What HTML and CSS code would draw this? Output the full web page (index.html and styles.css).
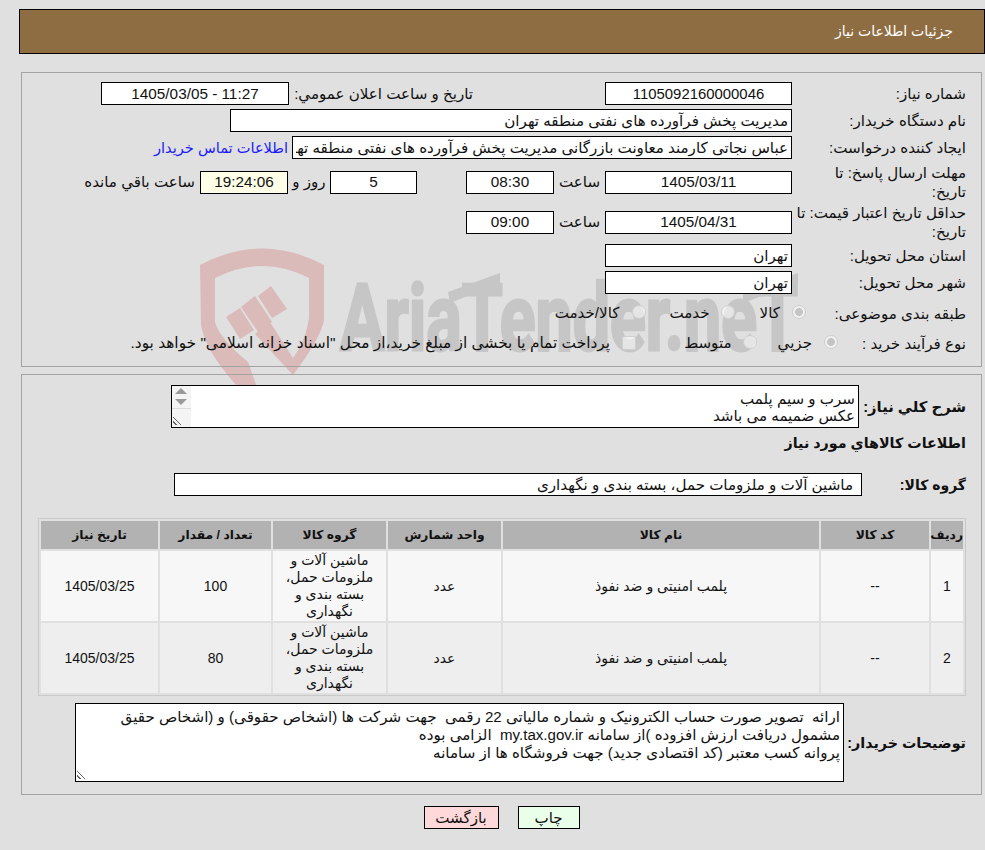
FILE: index.html
```html
<!DOCTYPE html>
<html lang="fa" dir="rtl">

<head>
  <meta charset="UTF-8" />
  <title>جزئیات اطلاعات نیاز</title>
  <link rel="stylesheet" href="styles.css">
</head>

<body>

  <!-- watermark sits behind the panels -->
  <svg class="watermark" width="985" height="850" viewBox="0 0 985 850" aria-hidden="true">
    <path fill="#dbbaba" d="M200,265 Q262,232 324,265 L324,320 Q321,338 293,375 L293,358 Q306,340 309,318 L309,278 Q262,254 215,278 L215,322 Q219,338 248,362 L258,390 L262,405 L236,385 Q205,350 201,325 Z" />
    <polygon fill="#dbbaba" points="226,317 240,308 254,330 240,339" />
    <polygon fill="#dbbaba" points="241,307 255,296 272,322 258,332" />
    <polygon fill="#dbbaba" points="258,296 271,286 287,309 272,318" />
    <polygon fill="#dbbaba" points="262,328 270,322 293,358 293,375 255,334" />
    <text class="wm-text" direction="ltr" x="340" y="350" textLength="458" lengthAdjust="spacingAndGlyphs">AriaTender.neT</text>
    <polygon fill="#c6c6c6" points="448,292 500,273 500,283 450,303" />
    <polygon fill="#c6c6c6" points="743,293 798,273 798,283 743,303" />
  </svg>

  <div class="page-title">جزئیات اطلاعات نیاز</div>

  <div class="panel panel-top">
    <div class="row">
      <div class="label">شماره نیاز:</div>
      <input class="field field-main center field-id" readonly value="1105092160000046">
      <div class="label-second">تاریخ و ساعت اعلان عمومي:</div>
      <input class="field field-announce center" dir="ltr" readonly value="1405/03/05 - 11:27">
    </div>
    <div class="row">
      <div class="label">نام دستگاه خریدار:</div>
      <input class="field field-buyer" readonly value="مدیریت پخش فرآورده های نفتی منطقه تهران">
    </div>
    <div class="row">
      <div class="label">ایجاد کننده درخواست:</div>
      <input class="field field-creator" readonly value="عباس نجاتی کارمند معاونت بازرگانی مدیریت پخش فرآورده های نفتی منطقه تهران">
      <a class="contact-link" href="#">اطلاعات تماس خریدار</a>
    </div>
    <div class="row row-tall">
      <div class="label">مهلت ارسال پاسخ: تا<br>تاریخ:</div>
      <input class="field field-main center" readonly value="1405/03/11">
      <div class="unit">ساعت</div>
      <input class="field field-time center" readonly value="08:30">
      <input class="field field-days center" readonly value="5">
      <div class="unit-days">روز و</div>
      <input class="field field-timer center" readonly value="19:24:06">
      <div class="timer-text">ساعت باقي مانده</div>
    </div>
    <div class="row row-tall row-tall-next">
      <div class="label">حداقل تاریخ اعتبار قیمت: تا<br>تاریخ:</div>
      <input class="field field-main center" readonly value="1405/04/31">
      <div class="unit">ساعت</div>
      <input class="field field-time center" readonly value="09:00">
    </div>
    <div class="row">
      <div class="label">استان محل تحویل:</div>
      <input class="field field-main" readonly value="تهران">
    </div>
    <div class="row">
      <div class="label">شهر محل تحویل:</div>
      <input class="field field-main" readonly value="تهران">
    </div>
    <div class="row row-choice">
      <div class="label label-cat">طبقه بندی موضوعی:</div>
      <div class="choices">
        <input class="radio" type="radio" name="cat" checked disabled>
        <span class="choice-1">کالا</span>
        <input class="radio radio-2" type="radio" name="cat" disabled>
        <span class="choice-2">خدمت</span>
        <input class="radio radio-3" type="radio" name="cat" disabled>
        <span class="choice-3">کالا/خدمت</span>
      </div>
    </div>
    <div class="row row-choice">
      <div class="label label-buy">نوع فرآیند خرید :</div>
      <div class="choices">
        <input class="radio" type="radio" name="buy" checked disabled>
        <span class="buy-1">جزيي</span>
        <input class="radio buy-radio-2" type="radio" name="buy" disabled>
        <span class="buy-2">متوسط</span>
        <span class="check-box"></span>
        <span class="buy-3">پرداخت تمام یا بخشی از مبلغ خرید،از محل "اسناد خزانه اسلامی" خواهد بود.</span>
      </div>
    </div>
  </div>

  <div class="panel panel-bottom">
    <div class="block-row">
      <div class="label-bold label-desc">شرح كلي نياز:</div>
      <div class="textbox textbox-desc">
        <div class="scroll-side">
          <span class="arrow-up"></span>
          <span class="arrow-down"></span>
          <span class="resize-mark"></span>
        </div>
        <div>سرب و سیم پلمب</div>
        <div>عکس ضمیمه می باشد</div>
      </div>
    </div>

    <h3 class="section-title">اطلاعات كالاهاي مورد نياز</h3>

    <div class="block-row group-row">
      <div class="label-bold label-group">گروه کالا:</div>
      <input class="field field-group" readonly value="ماشین آلات و ملزومات حمل، بسته بندی و نگهداری">
    </div>

    <table class="goods">
      <colgroup>
        <col class="c-idx"><col class="c-code"><col class="c-name"><col class="c-unit">
        <col class="c-group"><col class="c-qty"><col class="c-date">
      </colgroup>
      <thead>
        <tr>
          <th>ردیف</th>
          <th>کد کالا</th>
          <th>نام کالا</th>
          <th>واحد شمارش</th>
          <th>گروه کالا</th>
          <th>تعداد / مقدار</th>
          <th>تاریخ نیاز</th>
        </tr>
      </thead>
      <tbody>
        <tr class="odd">
          <td>1</td>
          <td>--</td>
          <td>پلمب امنیتی و ضد نفوذ</td>
          <td>عدد</td>
          <td>ماشین آلات و ملزومات حمل، بسته بندی و نگهداری</td>
          <td>100</td>
          <td>1405/03/25</td>
        </tr>
        <tr class="even">
          <td>2</td>
          <td>--</td>
          <td>پلمب امنیتی و ضد نفوذ</td>
          <td>عدد</td>
          <td>ماشین آلات و ملزومات حمل، بسته بندی و نگهداری</td>
          <td>80</td>
          <td>1405/03/25</td>
        </tr>
      </tbody>
    </table>

    <div class="block-row notes-row">
      <div class="label-bold label-notes">توضیحات خریدار:</div>
      <div class="textbox textbox-notes">
        <span class="resize-mark"></span>
        <div>ارائه&nbsp; تصویر صورت حساب الکترونیک و شماره مالیاتی 22 رقمی&nbsp; جهت شرکت ها (اشخاص حقوقی) و (اشخاص حقیق</div>
        <div>مشمول دریافت ارزش افزوده )از سامانه my.tax.gov.ir&nbsp; الزامی بوده</div>
        <div>پروانه کسب معتبر (کد اقتصادی جدید) جهت فروشگاه ها از سامانه</div>
      </div>
    </div>
  </div>

  <div class="buttons">
    <button class="print-btn">چاپ</button>
    <button class="back-btn">بازگشت</button>
  </div>

</body>

</html>
```

FILE: styles.css
```css
* {
  box-sizing: border-box;
}

body {
  margin: 0;
  padding-top: 9px;
  background: #e0e0e0;
  color: #111;
  font-family: "Liberation Sans", "DejaVu Sans", sans-serif;
  font-size: 15.1px;
  position: relative;
  height: 850px;
  overflow: hidden;
}

.watermark {
  position: absolute;
  top: 0;
  left: 0;
}

.wm-text {
  font-family: "Roboto", sans-serif;
  font-weight: 700;
  font-size: 92px;
  fill: #c6c6c6;
  stroke: #c6c6c6;
  stroke-width: 3px;
}

.page-title {
  position: relative;
  height: 45px;
  margin-left: 19px;
  padding: 13px 31px 0 0;
  background: #8f6d42;
  border: 1px solid #000;
  color: #fff;
  font-size: 14px;
}

.panel {
  position: relative;
  margin: 0 3px 0 21px;
  border: 1px solid #a3a3a3;
  padding-right: 15px;
}

.panel-top {
  height: 295px;
  margin-top: 18px;
  padding-top: 9px;
}

.panel-bottom {
  height: 421px;
  margin-top: 7px;
  padding-top: 10px;
}

/* top panel rows */
.row {
  display: flex;
  align-items: center;
  height: 23px;
  margin-bottom: 4px;
}

.row-tall {
  height: 38px;
  margin-bottom: 2px;
}

.row-tall-next {
  margin-bottom: 3px;
}

.row-choice {
  height: 24px;
  margin-top: 7px;
  margin-bottom: 6px;
}

.row-choice + .row-choice {
  margin-top: 6px;
}

.label {
  width: 174px;
  flex: none;
  line-height: 19px;
}

.label-cat { width: 160px; }
.label-buy { width: 128px; }

.label-second {
  width: 185px;
  margin-right: 131px;
  flex: none;
  padding-right: 1px;
}

.field {
  height: 23px;
  flex: none;
  border: 1px solid #000;
  border-radius: 0;
  background: #fff;
  color: #111;
  font-family: inherit;
  font-size: 15.1px;
  padding: 0 3px;
  outline: none;
}

.center {
  font-size: 15.3px;
  text-align: center;
}

.field-id { font-size: 14.9px; }

.field-main { width: 187px; }
.field-announce { width: 188px; }
.field-buyer { width: 562px; }
.field-creator { width: 500px; }
.field-time { width: 88px; }
.field-days { width: 87px; margin-right: 49px; }
.field-timer { width: 88px; background: #ffffe8; }
.field-group { width: 688px; padding-right: 8px; }

.contact-link {
  margin-right: 4px;
  color: #1a1aff;
  font-size: 14.6px;
  text-decoration: none;
}

.unit {
  width: 51px;
  flex: none;
  text-align: center;
}

.unit-days {
  width: 42px;
  flex: none;
  text-align: center;
}

.timer-text {
  margin-right: 5px;
}

/* radios */
.choices {
  display: flex;
  align-items: center;
}

.radio {
  appearance: none;
  width: 14px;
  height: 14px;
  flex: none;
  margin: 0 0 2px;
  border: 1px solid #cfcfcf;
  border-radius: 50%;
  background: rgba(255, 255, 255, 0.55);
}

.radio:checked {
  background: radial-gradient(circle, #c4c4c4 0, #c4c4c4 42%, #f0f0f0 50%);
}

.choice-1 { margin-right: 12px; }
.radio-2 { margin-right: 25px; }
.choice-2 { margin-right: 11px; }
.radio-3 { margin-right: 23px; }
.choice-3 { margin-right: 13px; }

.buy-1 { margin-right: 12px; }
.buy-radio-2 { margin-right: 21px; }
.buy-2 { margin-right: 11px; }

.check-box {
  width: 14px;
  height: 14px;
  flex: none;
  margin-right: 48px;
  border: 1px solid #cfcfcf;
  border-radius: 2px;
  background: rgba(255, 255, 255, 0.55);
}

.buy-3 { margin-right: 12px; font-size: 15.4px; white-space: nowrap; }

/* bottom panel */
.block-row {
  display: flex;
  align-items: center;
}

.label-bold {
  flex: none;
  font-weight: 700;
  font-size: 14.3px;
}

.label-desc { width: 107px; font-size: 14.8px; }
.label-group { width: 104px; font-size: 14px; }
.label-notes { width: 122px; }

.textbox {
  position: relative;
  flex: none;
  background: #fff;
  border: 1px solid #000;
  padding: 4px 3px;
  line-height: 18px;
  overflow: hidden;
  white-space: nowrap;
}

.textbox-desc {
  width: 688px;
  height: 43px;
  padding-top: 4px;
  line-height: 17px;
}

.textbox-notes {
  width: 769px;
  height: 79px;
}

.scroll-side {
  position: absolute;
  top: 0;
  left: 0;
  width: 19px;
  height: 100%;
  background: #f4f4f4;
}

.scroll-side::after {
  content: "";
  position: absolute;
  top: 22px;
  left: 0;
  width: 100%;
  border-top: 1px solid #dcdcdc;
}

.arrow-up,
.arrow-down {
  position: absolute;
  left: 3px;
  width: 0;
  height: 0;
  border-left: 6px solid transparent;
  border-right: 6px solid transparent;
}

.arrow-up {
  top: 2px;
  border-bottom: 6px solid #9a9a9a;
}

.arrow-down {
  top: 13px;
  border-top: 6px solid #9a9a9a;
}

.resize-mark {
  position: absolute;
  left: 1px;
  bottom: 2px;
  width: 10px;
  height: 10px;
  background: repeating-linear-gradient(45deg, transparent 0, transparent 2px, #666 2px, #666 3px);
  clip-path: polygon(0 0, 100% 100%, 0 100%);
}

.section-title {
  margin: 7px 0 0;
  height: 38px;
  font-size: 14.3px;
  font-weight: 700;
  line-height: 16px;
}

.group-row {
  height: 23px;
}

/* goods table */
.goods {
  width: 928px;
  margin-top: 22px;
  table-layout: fixed;
  border-collapse: separate;
  border-spacing: 2px;
  border: 1px solid #c9c9c9;
  font-size: 14px;
}

.c-idx { width: 32px; }
.c-code { width: 108px; }
.c-name { width: 316px; }
.c-unit { width: 113px; }
.c-group { width: 113px; }
.c-qty { width: 111px; }
.c-date { width: 117px; }

.goods th {
  height: 28px;
  padding: 0;
  background: #b2b2b2;
  font-size: 12.3px;
  font-weight: 700;
}

.goods td {
  height: 70px;
  padding: 0 6px;
  text-align: center;
  line-height: 17px;
}

.odd td { background: #f7f7f7; }
.even td { background: #eeeeee; }

.notes-row {
  margin-top: 7px;
}

/* bottom buttons */
.buttons {
  display: flex;
  justify-content: center;
  gap: 19px;
  margin: 11px 3px 0 21px;
}

.buttons button {
  height: 23px;
  border: 1px solid #000;
  border-radius: 0;
  color: #111;
  font-family: inherit;
  font-size: 15.1px;
  padding: 0;
}

.print-btn { width: 62px; background: #eaffea; }
.back-btn { width: 75px; background: #ffd9d9; }
```
